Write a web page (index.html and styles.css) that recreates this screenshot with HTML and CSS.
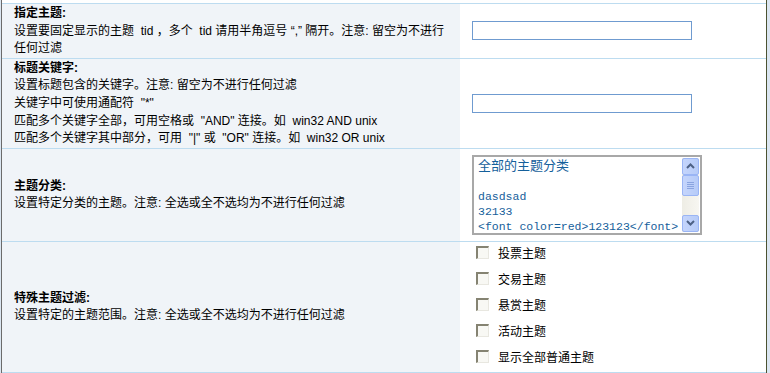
FILE: index.html
```html
<!DOCTYPE html>
<html lang="zh-CN">
  <head>
    <meta charset="UTF-8" />
    <title>主题过滤设置</title>
    <link rel="stylesheet" href="styles.css">
  </head>
  <body>
    <div class="frame">
      <table class="settings">
        <tr>
          <td class="label">
            <b>指定主题:</b><br />
            设置要固定显示的主题 &nbsp;tid ，多个 &nbsp;tid 请用半角逗号 “,” 隔开。注意: 留空为不进行任何过滤
          </td>
          <td class="field"><input type="text" class="txt" /></td>
        </tr>
        <tr>
          <td class="label">
            <b>标题关键字:</b><br />
            设置标题包含的关键字。注意: 留空为不进行任何过滤<br />
            关键字中可使用通配符 &nbsp;"*"<br />
            匹配多个关键字全部，可用空格或 &nbsp;"AND" 连接。如 &nbsp;win32 AND unix<br />
            匹配多个关键字其中部分，可用 &nbsp;"|" 或 &nbsp;"OR" 连接。如 &nbsp;win32 OR unix
          </td>
          <td class="field"><input type="text" class="txt" /></td>
        </tr>
        <tr>
          <td class="label">
            <b>主题分类:</b><br />
            设置特定分类的主题。注意: 全选或全不选均为不进行任何过滤
          </td>
          <td class="field">
            <div class="listbox">
              <div class="options">
                <div class="opt-cjk">全部的主题分类</div>
                <div>&nbsp;</div>
                <div>dasdsad</div>
                <div>32133</div>
                <div>&lt;font color=red&gt;123123&lt;/font&gt;</div>
              </div>
              <div class="scrollbar">
                <div class="sb-btn">
                  <svg width="9" height="6" viewBox="0 0 9 6"><path d="M1 5 L4.5 1.5 L8 5" fill="none" stroke="#4d6185" stroke-width="2"/></svg>
                </div>
                <div class="sb-thumb">
                  <svg width="7" height="7" viewBox="0 0 7 7"><path d="M0 0.5h7M0 2.5h7M0 4.5h7M0 6.5h7" stroke="#8aa4e0" stroke-width="1"/></svg>
                </div>
                <div class="sb-track"></div>
                <div class="sb-btn">
                  <svg width="9" height="6" viewBox="0 0 9 6"><path d="M1 1 L4.5 4.5 L8 1" fill="none" stroke="#4d6185" stroke-width="2"/></svg>
                </div>
              </div>
            </div>
          </td>
        </tr>
        <tr>
          <td class="label">
            <b>特殊主题过滤:</b><br />
            设置特定的主题范围。注意: 全选或全不选均为不进行任何过滤
          </td>
          <td class="field checks">
            <label class="check"><span class="box"></span>投票主题</label>
            <label class="check"><span class="box"></span>交易主题</label>
            <label class="check"><span class="box"></span>悬赏主题</label>
            <label class="check"><span class="box"></span>活动主题</label>
            <label class="check"><span class="box"></span>显示全部普通主题</label>
          </td>
        </tr>
      </table>
    </div>
  </body>
</html>
```

FILE: styles.css
```css
* {
  margin: 0;
  padding: 0;
  box-sizing: border-box;
}

body {
  font-family: "Liberation Sans", "Noto Sans CJK SC", sans-serif;
  font-size: 12px;
  color: #000;
  background-color: #dbe6f1;
  height: 373px;
  overflow: hidden;
}

.frame {
  margin-left: 1px;
  width: 766px;
  height: 373px;
  padding-top: 3px;
  background-color: #fff;
  border-left: 1px solid #6b6b6b;
  border-right: 1px solid #4b5232;
}

.settings {
  width: 100%;
  border-collapse: collapse;
}

.settings td {
  border-top: 1px solid #bddcf0;
  border-bottom: 1px solid #bddcf0;
  vertical-align: middle;
}

.label {
  width: 458px;
  padding: 1px 8px 0 12px;
  line-height: 17.6px;
  background-color: #f0f4f8;
}

.field {
  padding: 2px 12px;
  background-color: #fff;
}

.txt {
  display: block;
  width: 220px;
  height: 19px;
  border: 1px solid #6f9bd0;
  background-color: #fff;
}

.listbox {
  display: flex;
  width: 230px;
  height: 80px;
  margin: 4px 0;
  border: 2px solid #a8a8a8;
  background-color: #fff;
}

.options {
  flex: 1;
  overflow: hidden;
  padding: 2px 0 0 4px;
  font-family: "Liberation Mono", "Noto Sans CJK SC", monospace;
  font-size: 11.5px;
  line-height: 15px;
  color: #15609b;
  white-space: nowrap;
}

.opt-cjk {
  font-size: 13px;
}

.scrollbar {
  display: flex;
  flex-direction: column;
  width: 17px;
  margin: 1px 1px 1px 0;
  background: linear-gradient(to right, #eeede5, #f7f6f1);
}

.sb-btn,
.sb-thumb {
  display: flex;
  align-items: center;
  justify-content: center;
  height: 17px;
  border: 1px solid #9ab5f5;
  border-radius: 2px;
  background: linear-gradient(to right, #c5d5fc, #b6cbf8);
}

.sb-thumb {
  height: 21px;
}

.sb-track {
  flex: 1;
}

.checks {
  padding: 0 12px 0 16px;
}

.check {
  display: flex;
  align-items: center;
  height: 26px;
}

.check:first-child {
  margin-top: -2px;
}

.check:last-child {
  margin-bottom: 2px;
}

.box {
  width: 13px;
  height: 13px;
  margin-right: 9px;
  border-style: solid;
  border-width: 2px 1px 1px 2px;
  border-color: #858372 #e8e7e0 #e8e7e0 #858372;
  background-color: #f8f8f4;
}
```
